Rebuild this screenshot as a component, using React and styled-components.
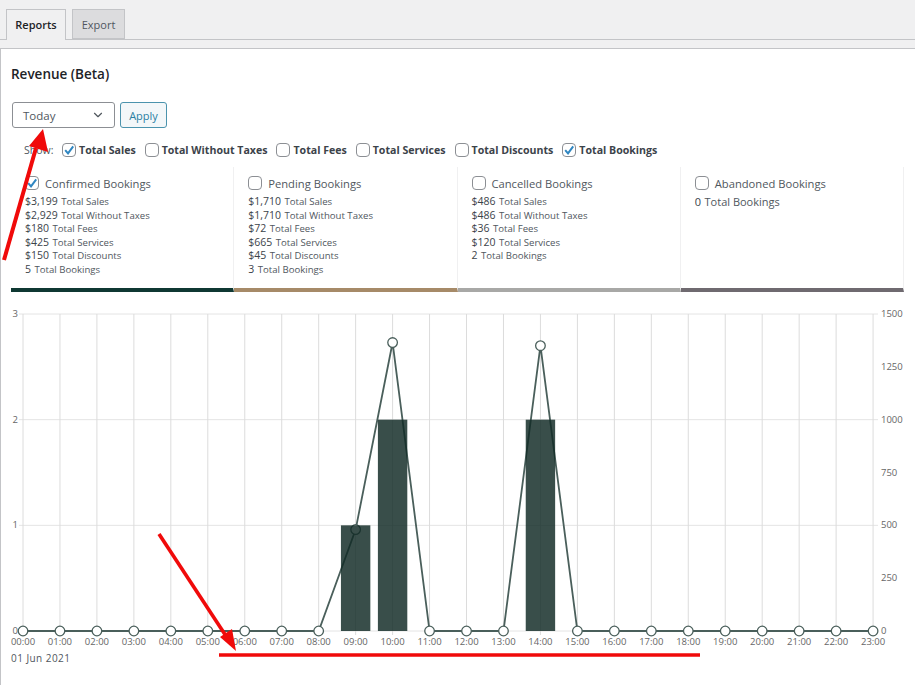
import React from 'react';
import styled, { createGlobalStyle } from 'styled-components';
import { FiChevronDown } from 'react-icons/fi';

const GlobalStyle = createGlobalStyle`
  html, body {
    margin: 0;
    padding: 0;
    background: #f0f0f1;
  }
  body {
    font-family: 'Open Sans', 'Liberation Sans', sans-serif;
    color: #3c434a;
    overflow: hidden;
  }
`;

const Page = styled.div`
  position: relative;
  width: 915px;
  height: 685px;
  overflow: hidden;
`;

const TabBar = styled.div`
  display: flex;
  gap: 6px;
  height: 40px;
  box-sizing: border-box;
  padding: 9px 0 0 6px;
  border-bottom: 1px solid #c3c4c7;
`;

const Tab = styled.div`
  box-sizing: border-box;
  height: ${(p) => (p.$active ? '31px' : '30px')};
  width: ${(p) => (p.$active ? '60px' : '53px')};
  border: 1px solid #c3c4c7;
  border-bottom: ${(p) => (p.$active ? 'none' : '1px solid #c3c4c7')};
  background: ${(p) => (p.$active ? '#f0f0f1' : '#dcdcde')};
  color: ${(p) => (p.$active ? '#1d2327' : '#50575e')};
  font-size: 11px;
  font-weight: ${(p) => (p.$active ? 600 : 500)};
  line-height: 29px;
  text-align: center;
`;

const Panel = styled.div`
  box-sizing: border-box;
  margin-top: 8px;
  height: 637px;
  background: #fff;
  border-top: 1px solid #c3c4c7;
  border-left: 1px solid #c3c4c7;
`;

const Title = styled.h2`
  margin: 0;
  padding: 15px 0 0 10px;
  height: 38px;
  box-sizing: content-box;
  font-size: 13.5px;
  line-height: 20px;
  font-weight: 600;
  color: #1d2327;
`;

const FilterRow = styled.div`
  display: flex;
  gap: 5px;
  padding-left: 11px;
`;

const Select = styled.div`
  box-sizing: border-box;
  width: 103px;
  height: 26px;
  display: flex;
  align-items: center;
  justify-content: space-between;
  padding: 0 9px 0 10px;
  background: #fff;
  border: 1px solid #8c8f94;
  border-radius: 3px;
  font-size: 11.5px;
  color: #50575e;
`;

const ApplyButton = styled.button`
  box-sizing: border-box;
  width: 47px;
  height: 26px;
  padding: 0;
  font: inherit;
  font-size: 11px;
  color: #2b7fa3;
  background: #f3f7f9;
  border: 1px solid #4b93ad;
  border-radius: 3px;
`;

const ShowRow = styled.div`
  display: flex;
  align-items: center;
  height: 14px;
  margin-top: 15px;
  padding-left: 23px;
`;

const ShowLabel = styled.span`
  width: 38px;
  font-size: 10.5px;
  color: #50575e;
`;

const ShowOption = styled.label`
  display: flex;
  align-items: center;
  gap: 3px;
  margin-right: 9px;
  font-size: 10.6px;
  font-weight: 700;
  color: #3c434a;
  white-space: nowrap;
`;

const Box = styled.span`
  box-sizing: border-box;
  flex: none;
  width: 14px;
  height: 14px;
  display: inline-flex;
  align-items: center;
  justify-content: center;
  background: #fff;
  border: 1px solid #8c8f94;
  border-radius: 4px;
  svg {
    width: 12px;
    height: 12px;
  }
`;

const Cards = styled.div`
  display: grid;
  grid-template-columns: repeat(4, 223.25px);
  margin: 10px 0 0 10px;
`;

const Card = styled.div`
  box-sizing: border-box;
  height: 125px;
  padding: 9px 0 0 14px;
  border-right: 1px solid #f0f0f1;
  border-bottom: 4px solid ${(p) => p.$color};
`;

const CardHead = styled.div`
  display: flex;
  align-items: center;
  gap: 6px;
  height: 14px;
  margin-bottom: 5px;
  font-size: 11.2px;
  color: #50575e;
`;

const Stat = styled.div`
  font-size: ${(p) => (p.$large ? '11px' : '9.6px')};
  line-height: 13.55px;
  color: #50575e;
  white-space: nowrap;
  b {
    font-weight: 400;
    font-size: ${(p) => (p.$large ? '11px' : '10.5px')};
    color: #3c434a;
    margin-right: 3.5px;
  }
`;

const Plot = styled.svg`
  display: block;
  width: 914px;
  height: 345px;
  margin-top: 13px;
  text {
    font-family: 'Open Sans', 'Liberation Sans', sans-serif;
    font-size: 9.5px;
    fill: #666;
  }
`;

const DateLabel = styled.div`
  padding: 1px 0 0 10px;
  font-size: 10px;
  line-height: 14px;
  letter-spacing: 0.45px;
  color: #50575e;
`;

const Overlay = styled.svg`
  position: absolute;
  left: 0;
  top: 0;
  width: 915px;
  height: 685px;
  pointer-events: none;
`;

const showOptions = [
  ['Total Sales', true],
  ['Total Without Taxes', false],
  ['Total Fees', false],
  ['Total Services', false],
  ['Total Discounts', false],
  ['Total Bookings', true],
];

const bookingCards = [
  {
    name: 'Confirmed Bookings',
    color: '#0f3832',
    checked: true,
    stats: [
      ['$3,199', 'Total Sales'],
      ['$2,929', 'Total Without Taxes'],
      ['$180', 'Total Fees'],
      ['$425', 'Total Services'],
      ['$150', 'Total Discounts'],
      ['5', 'Total Bookings'],
    ],
  },
  {
    name: 'Pending Bookings',
    color: '#a68a68',
    stats: [
      ['$1,710', 'Total Sales'],
      ['$1,710', 'Total Without Taxes'],
      ['$72', 'Total Fees'],
      ['$665', 'Total Services'],
      ['$45', 'Total Discounts'],
      ['3', 'Total Bookings'],
    ],
  },
  {
    name: 'Cancelled Bookings',
    color: '#a8a8a6',
    stats: [
      ['$486', 'Total Sales'],
      ['$486', 'Total Without Taxes'],
      ['$36', 'Total Fees'],
      ['$120', 'Total Services'],
      ['2', 'Total Bookings'],
    ],
  },
  {
    name: 'Abandoned Bookings',
    color: '#6f6a70',
    large: true,
    stats: [['0', 'Total Bookings']],
  },
];

const X0 = 23;
const STEP = 36.96;
const Y0 = 631;
const Y_TOP = 314;
const hours = Array.from({ length: 24 }, (_, i) => i);
const revenue = { 9: 480, 10: 1365, 14: 1350 };
const bookings = { 9: 1, 10: 2, 14: 2 };

const xAt = (h) => X0 + h * STEP;
const yRevenue = (v) => Y0 - (v / 1500) * (Y0 - Y_TOP);
const yBookings = (v) => Y0 - (v / 3) * (Y0 - Y_TOP);

function Check({ checked }) {
  return (
    <Box>
      {checked && (
        <svg viewBox='0 0 12 12'>
          <path d='M2.2 6.2 L5 9.4 L10.2 2.4' fill='none' stroke='#2f86c1' strokeWidth='2' />
        </svg>
      )}
    </Box>
  );
}

function Chart() {
  const line = hours.map((h) => `${xAt(h)},${yRevenue(revenue[h] || 0)}`).join(' ');
  return (
    <Plot viewBox='1 305 914 345'>
      {[0, 1, 2, 3].map((v) => (
        <g key={v}>
          <line x1='19' x2='878' y1={yBookings(v)} y2={yBookings(v)} stroke='#e4e4e4' />
          <text x='18' y={yBookings(v) + 3} textAnchor='end'>{v}</text>
        </g>
      ))}
      {[0, 250, 500, 750, 1000, 1250, 1500].map((v) => (
        <text key={v} x='881' y={yRevenue(v) + 3}>{v}</text>
      ))}
      {hours.map((h) => (
        <g key={h}>
          <line x1={xAt(h)} x2={xAt(h)} y1={Y_TOP} y2={Y0 + 4} stroke='#dcdcdc' />
          <text x={xAt(h)} y='645' textAnchor='middle'>
            {`${String(h).padStart(2, '0')}:00`}
          </text>
        </g>
      ))}
      <polyline points={line} fill='none' stroke='#4a5f5b' strokeWidth='1.8' />
      {hours.map((h) => (
        <circle
          key={h}
          cx={xAt(h)}
          cy={yRevenue(revenue[h] || 0)}
          r='4.8'
          fill='#fff'
          stroke='#4a5f5b'
          strokeWidth='1.3'
        />
      ))}
      {Object.entries(bookings).map(([h, v]) => (
        <rect
          key={h}
          x={xAt(Number(h)) - 14.7}
          y={yBookings(v)}
          width='29.4'
          height={Y0 - yBookings(v)}
          fill='#112a25'
          fillOpacity='0.83'
        />
      ))}
    </Plot>
  );
}

export default function App() {
  return (
    <Page>
      <GlobalStyle />
      <TabBar>
        <Tab $active>Reports</Tab>
        <Tab>Export</Tab>
      </TabBar>
      <Panel>
        <Title>Revenue (Beta)</Title>
        <FilterRow>
          <Select>
            Today
            <FiChevronDown size={14} />
          </Select>
          <ApplyButton type='button'>Apply</ApplyButton>
        </FilterRow>
        <ShowRow>
          <ShowLabel>Show:</ShowLabel>
          {showOptions.map(([label, checked]) => (
            <ShowOption key={label}>
              <Check checked={checked} />
              {label}
            </ShowOption>
          ))}
        </ShowRow>
        <Cards>
          {bookingCards.map((card) => (
            <Card key={card.name} $color={card.color}>
              <CardHead>
                <Check checked={card.checked} />
                {card.name}
              </CardHead>
              {card.stats.map(([amount, label]) => (
                <Stat key={label} $large={card.large}>
                  <b>{amount}</b>
                  {label}
                </Stat>
              ))}
            </Card>
          ))}
        </Cards>
        <Chart />
        <DateLabel>01 Jun 2021</DateLabel>
      </Panel>
      <Overlay viewBox='0 0 915 685'>
        <path d='M4 260 L36 148' stroke='#f00a0a' strokeWidth='4' fill='none' />
        <path d='M43 129 L29 146 L48 152 Z' fill='#f00a0a' />
        <path d='M159 534 L226 636' stroke='#f00a0a' strokeWidth='3.6' fill='none' />
        <path d='M236 651 L220 637 L232 629 Z' fill='#f00a0a' />
        <path d='M219 655 H700' stroke='#f00a0a' strokeWidth='3.4' fill='none' />
      </Overlay>
    </Page>
  );
}
